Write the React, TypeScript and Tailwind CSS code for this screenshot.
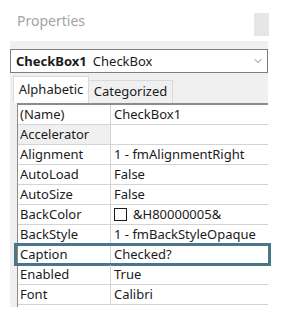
import type { FC } from "react";
import { ChevronDown } from "lucide-react";

type Prop = { name: string; value: string; swatch?: boolean };

const props: Prop[] = [
  { name: "(Name)", value: "CheckBox1" },
  { name: "Accelerator", value: "" },
  { name: "Alignment", value: "1 - fmAlignmentRight" },
  { name: "AutoLoad", value: "False" },
  { name: "AutoSize", value: "False" },
  { name: "BackColor", value: "&H80000005&", swatch: true },
  { name: "BackStyle", value: "1 - fmBackStyleOpaque" },
  { name: "Caption", value: "Checked?" },
  { name: "Enabled", value: "True" },
  { name: "Font", value: "Calibri" },
];

const font = { fontFamily: '"Noto Sans", "Open Sans", sans-serif' };

const App: FC = () => {
  return (
    <div className="h-[317px] w-[284px] overflow-hidden bg-white text-[13px] text-[#1b1b1b]" style={font}>
      {/* title bar */}
      <div className="flex h-[41px] items-start justify-between pl-[17px] pr-[15px]">
        <span className="mt-[11px] text-[14px] leading-[20px] text-[#a3a3a3]">Properties</span>
        <div className="mt-[13px] h-[23px] w-[15px] bg-[#e6e6e6]" />
      </div>

      <div className="ml-[10px] w-[258px] bg-[#f0f0f0] pt-[8px]">
        {/* object dropdown */}
        <div className="flex h-[24px] items-center justify-between border border-[#7f7f7f] bg-white pl-[5px] pr-[3px]">
          <div className="leading-none">
            <span className="font-bold">CheckBox1</span>
            <span className="ml-[6px]">CheckBox</span>
          </div>
          <ChevronDown className="h-[12px] w-[12px] text-[#555]" strokeWidth={1.5} />
        </div>

        {/* tabs */}
        <div className="mt-[3px] flex h-[27px] items-end pl-[3px]">
          <div className="flex h-[27px] w-[76px] items-center justify-center border border-b-0 border-[#d9d9d9] bg-white">
            Alphabetic
          </div>
          <div className="flex h-[23px] w-[84px] items-center justify-center border border-b-0 border-l-0 border-[#d9d9d9] bg-[#f0f0f0]">
            Categorized
          </div>
        </div>

        {/* grid */}
        <div className="ml-[7px] border-l border-t-[2px] border-[#8c8c8c] bg-white pb-[2px]">
          {props.map((p) => {
            const selected = p.name === "Caption";
            return (
              <div
                key={p.name}
                className="relative flex h-[20px] border-b border-[#d4d4d4] leading-[19px]"
              >
                <div
                  className={`w-[93px] shrink-0 border-r border-[#d4d4d4] pl-[2px] ${
                    p.name === "Accelerator" ? "bg-[#f0f0f0]" : ""
                  }`}
                >
                  {p.name}
                </div>
                <div className="flex flex-1 items-center gap-[6px] pl-[3px]">
                  {p.swatch && <span className="h-[13px] w-[13px] border border-[#1b1b1b] bg-white" />}
                  <span>{p.value}</span>
                </div>
                {selected && (
                  <span className="pointer-events-none absolute -top-[2px] -bottom-[2px] -left-[4px] -right-[3px] border-[3px] border-[#4a7787]" />
                )}
              </div>
            );
          })}
        </div>
      </div>
    </div>
  );
};

export default App;
